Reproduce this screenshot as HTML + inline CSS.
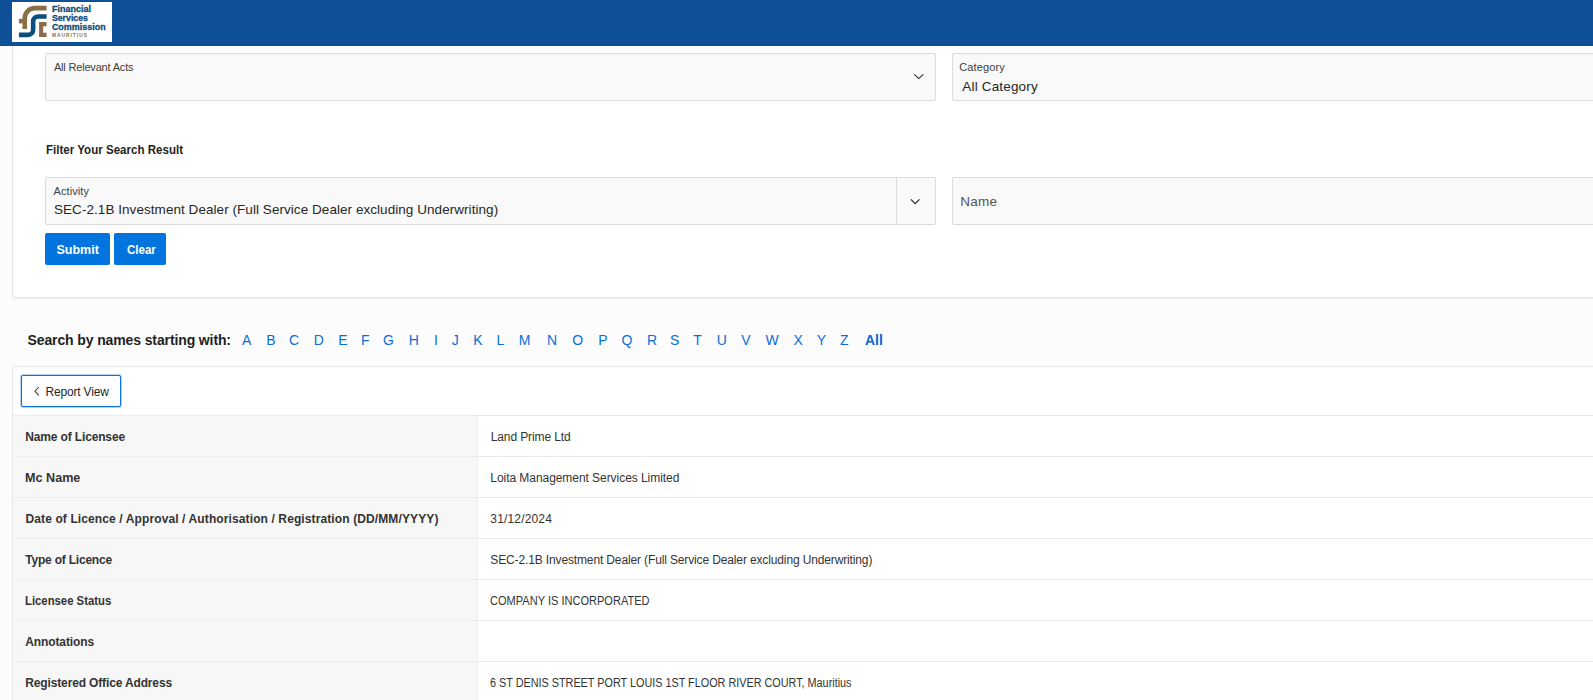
<!DOCTYPE html>
<html><head><meta charset="utf-8"><style>
html,body{margin:0;padding:0}
body{width:1593px;height:700px;overflow:hidden;position:relative;background:#fcfcfc;font-family:"Liberation Sans",sans-serif}
.t{position:absolute;white-space:nowrap;line-height:20px}
.lt{position:absolute;top:330px;width:40px;text-align:center;font-size:14px;line-height:20px;color:#0a6ed8}
#hdr{position:absolute;left:0;top:0;width:1593px;height:46px;background:#0f5198;border-bottom:0}
#hdrline{position:absolute;left:0;top:45px;width:1593px;height:1px;background:#0b4a94}
#panel{position:absolute;left:12px;top:20px;width:1700px;height:276px;background:#fff;border:1px solid #e4e4e4;border-radius:2px;box-shadow:0 1px 1px rgba(0,0,0,.04),0 2px 4px rgba(0,0,0,.025)}
.fld{position:absolute;background:#f9f9f9;border:1px solid #dcdcdc;border-radius:2px;box-sizing:border-box}
.btn{position:absolute;background:#0274dd;border-radius:2px}
#rep{position:absolute;left:12px;top:366px;width:1700px;height:400px;background:#fff;border:1px solid #e6e6e6;box-sizing:border-box}
#rvbtn{position:absolute;left:21px;top:375px;width:100px;height:32px;box-sizing:border-box;border:1px solid #0a72dc;border-radius:2px;background:#fff;box-shadow:0 0 0 1px rgba(10,114,220,.3)}
.rl{position:absolute;left:13px;width:464px;height:40px;background:#f7f7f7;border-top:1px solid #ececec}
.rv{position:absolute;left:477px;width:1200px;height:40px;background:#fff;border-top:1px solid #e8e8e8;border-left:1px solid #efefef}
.chev{position:absolute} svg{display:block}
</style></head><body>
<div id="panel"></div>
<div class="fld" style="left:45px;top:53px;width:891px;height:48px"></div>
<div class="fld" style="left:952px;top:53px;width:800px;height:48px"></div>
<div class="fld" style="left:45px;top:177px;width:891px;height:48px"></div>
<div style="position:absolute;left:896px;top:178px;width:1px;height:46px;background:#dcdcdc"></div>
<div class="fld" style="left:952px;top:177px;width:800px;height:48px"></div>
<div class="chev" style="left:913px;top:73px"><svg width="12" height="8" viewBox="0 0 12 8"><path d="M1.3 1.3 L5.8 5.6 L10.3 1.3" fill="none" stroke="#262626" stroke-width="1.05"/></svg></div>
<div class="chev" style="left:909px;top:197px"><svg width="12" height="8" viewBox="0 0 12 8"><path d="M1.9 2.4 L6.2 6.6 L10.5 2.4" fill="none" stroke="#262626" stroke-width="1.15"/></svg></div>
<div class="btn" style="left:45px;top:233px;width:65px;height:32px"></div>
<div class="btn" style="left:114px;top:233px;width:52px;height:32px"></div>
<div id="rep"></div>
<div id="rvbtn"></div>
<svg style="position:absolute;left:33px;top:385px" width="8" height="12" viewBox="0 0 8 12"><path d="M5.9 2 L1.9 6.2 L5.9 10.4" fill="none" stroke="#404040" stroke-width="1.05"/></svg>
<div class="rl" style="top:415px"></div><div class="rv" style="top:415px"></div><div class="rl" style="top:456px"></div><div class="rv" style="top:456px"></div><div class="rl" style="top:497px"></div><div class="rv" style="top:497px"></div><div class="rl" style="top:538px"></div><div class="rv" style="top:538px"></div><div class="rl" style="top:579px"></div><div class="rv" style="top:579px"></div><div class="rl" style="top:620px"></div><div class="rv" style="top:620px"></div><div class="rl" style="top:661px"></div><div class="rv" style="top:661px"></div>
<div style="position:absolute;left:12px;top:702px;width:1px;height:1px"></div>
<div id="hdr"></div><div id="hdrline"></div>
<svg id="logo" width="100" height="40" viewBox="0 0 100 40" style="position:absolute;left:12px;top:2px;background:#fff">
<path d="M34.6 6.15 H22.75 A10 10 0 0 0 12.75 16.15 V26.9" fill="none" stroke="#8b6d47" stroke-width="4.6"/>
<rect x="6.9" y="16.9" width="6" height="4.5" fill="#8b6d47"/>
<path d="M34.6 14.45 H26.15 A5 5 0 0 0 21.15 19.45 V27.85 A5 5 0 0 1 16.15 32.85 H6.9" fill="none" stroke="#0d4e7d" stroke-width="4.6"/>
<path d="M27.1 20 H34.6 V24.3 H31.2 V30.8 H34.6 V34.9 H27.1 Z" fill="#8b6d47"/>
<g font-family="Liberation Sans" font-weight="700" fill="#0c4a7a" stroke="#0c4a7a" stroke-width="0.3" font-size="9.4">
<text x="39.9" y="10.3" textLength="39.2" lengthAdjust="spacingAndGlyphs">Financial</text>
<text x="39.9" y="18.7" textLength="36.1" lengthAdjust="spacingAndGlyphs">Services</text>
<text x="39.9" y="27.5" textLength="53.8" lengthAdjust="spacingAndGlyphs">Commission</text>
</g>
<text x="39.9" y="35.2" font-family="Liberation Sans" font-weight="700" font-size="4.8" fill="#8b6d47" textLength="35" lengthAdjust="spacing">MAURITIUS</text>
</svg>
<div class="t" style="left:53.900000000000006px;top:56.7px;font-size:11.0px;font-weight:400;letter-spacing:-0.182px;color:#404040">All Relevant Acts</div><div class="t" style="left:959.3000000000001px;top:56.7px;font-size:11.0px;font-weight:400;letter-spacing:0.106px;color:#404040">Category</div><div class="t" style="left:962.3000000000001px;top:76.7px;font-size:13.5px;font-weight:400;letter-spacing:0.168px;color:#262626">All Category</div><div class="t" style="left:45.5px;top:139.6px;font-size:12.5px;font-weight:700;letter-spacing:0.0px;color:#1f1f1f;transform:scaleX(0.9245);transform-origin:0 0">Filter Your Search Result</div><div class="t" style="left:53.6px;top:180.9px;font-size:11.0px;font-weight:400;letter-spacing:0.077px;color:#404040">Activity</div><div class="t" style="left:54.0px;top:199.6px;font-size:13.5px;font-weight:400;letter-spacing:0.053px;color:#262626">SEC-2.1B Investment Dealer (Full Service Dealer excluding Underwriting)</div><div class="t" style="left:960.2px;top:192.0px;font-size:13.5px;font-weight:400;letter-spacing:0.291px;color:#555">Name</div><div class="t" style="left:56.400000000000006px;top:240.0px;font-size:12.5px;font-weight:700;letter-spacing:0.036px;color:#fff">Submit</div><div class="t" style="left:126.7px;top:239.9px;font-size:12.0px;font-weight:700;letter-spacing:0.0px;color:#fff;transform:scaleX(0.96);transform-origin:0 0">Clear</div><div class="t" style="left:27.5px;top:330.1px;font-size:14.0px;font-weight:700;letter-spacing:-0.118px;color:#1f1f1f">Search by names starting with:</div><div class="t" style="left:865.1px;top:329.8px;font-size:14.0px;font-weight:700;letter-spacing:0.0px;color:#0866d6;transform:scaleX(0.9941);transform-origin:0 0">All</div><div class="t" style="left:45.5px;top:381.8px;font-size:12.0px;font-weight:400;letter-spacing:-0.185px;color:#262626">Report View</div><div class="t" style="left:25.3px;top:426.7px;font-size:12.0px;font-weight:700;letter-spacing:-0.15px;color:#333">Name of Licensee</div><div class="t" style="left:25.2px;top:467.7px;font-size:12.0px;font-weight:700;letter-spacing:0.0px;color:#333;transform:scaleX(1.051);transform-origin:0 0">Mc Name</div><div class="t" style="left:25.5px;top:508.8px;font-size:12.0px;font-weight:700;letter-spacing:0.112px;color:#333">Date of Licence / Approval / Authorisation / Registration (DD/MM/YYYY)</div><div class="t" style="left:25.3px;top:549.7px;font-size:12.0px;font-weight:700;letter-spacing:-0.214px;color:#333">Type of Licence</div><div class="t" style="left:25.4px;top:590.7px;font-size:12.0px;font-weight:700;letter-spacing:0.0px;color:#333;transform:scaleX(0.9433);transform-origin:0 0">Licensee Status</div><div class="t" style="left:25.3px;top:631.7px;font-size:12.0px;font-weight:700;letter-spacing:-0.119px;color:#333">Annotations</div><div class="t" style="left:25.3px;top:672.7px;font-size:12.0px;font-weight:700;letter-spacing:-0.145px;color:#333">Registered Office Address</div><div class="t" style="left:490.7px;top:426.7px;font-size:12.0px;font-weight:400;letter-spacing:-0.102px;color:#333">Land Prime Ltd</div><div class="t" style="left:490.3px;top:467.7px;font-size:12.0px;font-weight:400;letter-spacing:-0.054px;color:#333">Loita Management Services Limited</div><div class="t" style="left:490.3px;top:508.8px;font-size:12.0px;font-weight:400;letter-spacing:0.166px;color:#333">31/12/2024</div><div class="t" style="left:490.3px;top:549.7px;font-size:12.0px;font-weight:400;letter-spacing:-0.134px;color:#333">SEC-2.1B Investment Dealer (Full Service Dealer excluding Underwriting)</div><div class="t" style="left:490.4px;top:590.7px;font-size:12.0px;font-weight:400;letter-spacing:0.0px;color:#333;transform:scaleX(0.9203);transform-origin:0 0">COMPANY IS INCORPORATED</div><div class="t" style="left:490.4px;top:672.7px;font-size:12.0px;font-weight:400;letter-spacing:0.0px;color:#333;transform:scaleX(0.902);transform-origin:0 0">6 ST DENIS STREET PORT LOUIS 1ST FLOOR RIVER COURT, Mauritius</div>
<div class="lt" style="left:226.7px">A</div><div class="lt" style="left:250.89999999999998px">B</div><div class="lt" style="left:274px">C</div><div class="lt" style="left:298.9px">D</div><div class="lt" style="left:322.8px">E</div><div class="lt" style="left:345.4px">F</div><div class="lt" style="left:368.4px">G</div><div class="lt" style="left:393.8px">H</div><div class="lt" style="left:416px">I</div><div class="lt" style="left:435.2px">J</div><div class="lt" style="left:457.8px">K</div><div class="lt" style="left:480.4px">L</div><div class="lt" style="left:504.6px">M</div><div class="lt" style="left:532px">N</div><div class="lt" style="left:557.7px">O</div><div class="lt" style="left:582.9px">P</div><div class="lt" style="left:607px">Q</div><div class="lt" style="left:632px">R</div><div class="lt" style="left:654.7px">S</div><div class="lt" style="left:677.6px">T</div><div class="lt" style="left:701.8px">U</div><div class="lt" style="left:726px">V</div><div class="lt" style="left:752.1px">W</div><div class="lt" style="left:778.1px">X</div><div class="lt" style="left:801.4px">Y</div><div class="lt" style="left:824.3px">Z</div>
</body></html>
